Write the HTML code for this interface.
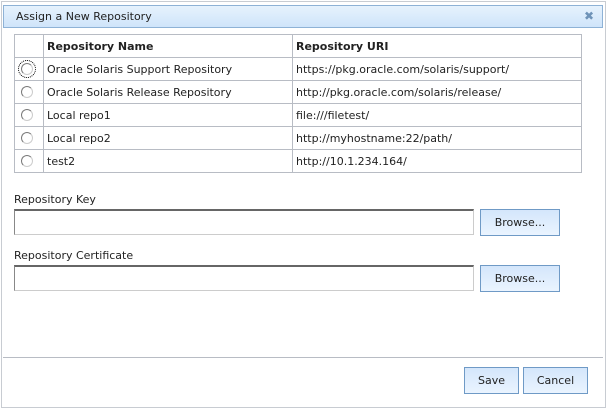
<!DOCTYPE html>
<html><head><style>
body{margin:0;width:607px;height:409px;background:#fff;font-family:"DejaVu Sans",Verdana,sans-serif;font-size:11px;color:#222;position:relative;overflow:hidden}
.dlg{position:absolute;left:1px;top:1px;width:603px;height:405px;border:1px solid #c8ccd2;background:#fff}
.title{position:absolute;left:3px;top:5px;width:600px;height:23px;border:1px solid #8eb2d6;background:linear-gradient(#e6f2fd,#cfe4fa);box-sizing:border-box}
.tt{position:absolute;left:12px;top:4px}
.x{position:absolute;right:8px;top:3px;color:#6f93b8;font-weight:bold;font-size:12px}
table{position:absolute;left:14px;top:34px;border-collapse:collapse;width:568px}
td,th{border:1px solid #b8bcc4;height:22px;padding:0 0 0 3px;text-align:left;white-space:nowrap}
th{font-weight:bold}
.r{width:10px;height:10px;border:1px solid #888;border-radius:50%;margin-left:3px;background:#fff;border-color:#7a7a7a #ccc #ccc #7a7a7a}
.lbl{position:absolute;left:14px}
.in{position:absolute;left:14px;width:460px;height:26px;box-sizing:border-box;border:1px solid #ccc;border-top:2px solid #666;border-left:1px solid #888}
.btn{position:absolute;box-sizing:border-box;border:1px solid #6f9ac6;background:linear-gradient(#d4e6fb,#eaf4ff);text-align:center;line-height:25px;height:27px}
.sep{position:absolute;left:3px;top:357px;width:600px;height:1px;background:#b8bcc4}
</style></head><body>
<div class="dlg"></div>
<div class="title"><span class="tt">Assign a New Repository</span><span class="x">✖</span></div>
<table>
<tr><th style="width:25px"></th><th style="width:245px">Repository Name</th><th>Repository URI</th></tr>
<tr><td><div class="r" style="outline:1px dotted #000;outline-offset:2px"></div></td><td>Oracle Solaris Support Repository</td><td>https://pkg.oracle.com/solaris/support/</td></tr>
<tr><td><div class="r"></div></td><td>Oracle Solaris Release Repository</td><td>http://pkg.oracle.com/solaris/release/</td></tr>
<tr><td><div class="r"></div></td><td>Local repo1</td><td>file:///filetest/</td></tr>
<tr><td><div class="r"></div></td><td>Local repo2</td><td>http://myhostname:22/path/</td></tr>
<tr><td><div class="r"></div></td><td>test2</td><td>http://10.1.234.164/</td></tr>
</table>
<div class="lbl" style="top:193px">Repository Key</div>
<div class="in" style="top:209px"></div>
<div class="btn" style="left:480px;top:209px;width:80px">Browse...</div>
<div class="lbl" style="top:249px">Repository Certificate</div>
<div class="in" style="top:265px"></div>
<div class="btn" style="left:480px;top:265px;width:80px">Browse...</div>
<div class="sep"></div>
<div class="btn" style="left:464px;top:367px;width:55px">Save</div>
<div class="btn" style="left:523px;top:367px;width:65px">Cancel</div>
</body></html>
